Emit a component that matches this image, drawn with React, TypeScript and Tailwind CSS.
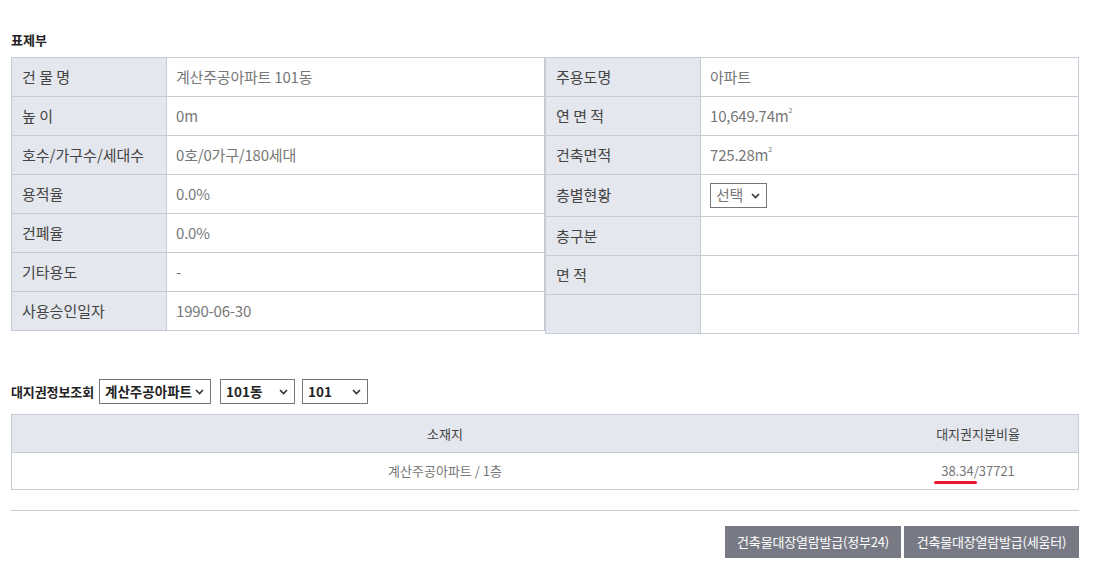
import React from 'react';

type Row = { label: string; value?: React.ReactNode; tall?: boolean };

const leftRows: Row[] = [
  { label: '건 물 명', value: '계산주공아파트 101동' },
  { label: '높 이', value: '0m' },
  { label: '호수/가구수/세대수', value: '0호/0가구/180세대' },
  { label: '용적율', value: '0.0%' },
  { label: '건폐율', value: '0.0%' },
  { label: '기타용도', value: '-' },
  { label: '사용승인일자', value: '1990-06-30' },
];

const Sq = ({ n }: { n: string }) => (
  <span>
    {n}m<sup className="text-[7px] align-[5px]">2</sup>
  </span>
);

const Chevron = () => (
  <svg width="9" height="6" viewBox="0 0 9 6" className="shrink-0">
    <path d="M1 1l3.5 3.5L8 1" fill="none" stroke="#333" strokeWidth="1.6" />
  </svg>
);

const Select = ({ text, w, bold }: { text: string; w: string; bold?: boolean }) => (
  <div
    className={`flex items-center justify-between h-[25px] border border-[#767676] bg-white pl-[5px] pr-[6px] whitespace-nowrap ${w} ${
      bold ? 'font-bold text-[13.5px] text-[#222]' : 'text-[15px] text-[#777]'
    }`}
  >
    <span>{text}</span>
    <Chevron />
  </div>
);

const rightRows: Row[] = [
  { label: '주용도명', value: '아파트' },
  { label: '연 면 적', value: <Sq n="10,649.74" /> },
  { label: '건축면적', value: <Sq n="725.28" /> },
  { label: '층별현황', value: <Select text="선택" w="w-[57px]" />, tall: true },
  { label: '층구분' },
  { label: '면 적' },
  { label: '' },
];

const InfoTable = ({ rows }: { rows: Row[] }) => (
  <div className="w-[534px] border-t border-l border-r border-[#c7cbd6]">
    {rows.map((r, i) => (
      <div key={i} className={`flex border-b border-[#c7cbd6] ${r.tall ? 'h-[42px]' : 'h-[39px]'}`}>
        <div className="w-[155px] shrink-0 bg-[#e4e7ed] border-r border-[#c7cbd6] flex items-center pl-[10px] text-[15px] text-[#444]">
          {r.label}
        </div>
        <div className="flex-1 flex items-center pl-[9px] text-[15px] text-[#777] tracking-[-0.2px]">{r.value}</div>
      </div>
    ))}
  </div>
);

export default function App() {
  return (
    <div className="w-[1097px] h-[584px] bg-white px-[11px] pt-[31px] font-['Noto_Sans_CJK_KR','Noto_Sans',sans-serif]">
      <h3 className="text-[13px] font-bold text-[#222] leading-[18px] mb-[8px]">표제부</h3>
      <div className="flex items-start">
        <InfoTable rows={leftRows} />
        <InfoTable rows={rightRows} />
      </div>

      <div className="flex items-center gap-[5px] mt-[45px]">
        <h3 className="text-[13px] font-bold text-[#222] whitespace-nowrap tracking-[-0.1px]">대지권정보조회</h3>
        <Select text="계산주공아파트" w="w-[112px] shrink-0" bold />
        <Select text="101동" w="w-[75px] ml-[4px] shrink-0" bold />
        <Select text="101" w="w-[66px] ml-[2px] shrink-0" bold />
      </div>

      <div className="mt-[10px] w-[1068px] border border-[#c7cbd6]">
        <div className="flex h-[38px] bg-[#e4e7ed] border-b border-[#c7cbd6] text-[13px] text-[#444]">
          <div className="flex-1 flex items-center justify-center">소재지</div>
          <div className="w-[200px] flex items-center justify-center">대지권지분비율</div>
        </div>
        <div className="flex h-[36px] text-[13px] text-[#777]">
          <div className="flex-1 flex items-center justify-center">계산주공아파트 / 1층</div>
          <div className="w-[200px] flex items-center justify-center">
            <span className="relative">
              38.34/37721
              <span className="absolute left-[-7px] top-[20px] w-[43px] h-[3px] rounded-full bg-[#e8162a]" />
            </span>
          </div>
        </div>
      </div>

      <div className="mt-[20px] w-[1068px] border-t border-[#c7cbd6]" />

      <div className="flex justify-end gap-[3px] mt-[15px] w-[1068px]">
        <button className="h-[32px] w-[176px] bg-[#777a85] text-white text-[13px] tracking-[-0.2px]">건축물대장열람발급(정부24)</button>
        <button className="h-[32px] w-[175px] bg-[#777a85] text-white text-[13px] tracking-[-0.2px]">건축물대장열람발급(세움터)</button>
      </div>
    </div>
  );
}
